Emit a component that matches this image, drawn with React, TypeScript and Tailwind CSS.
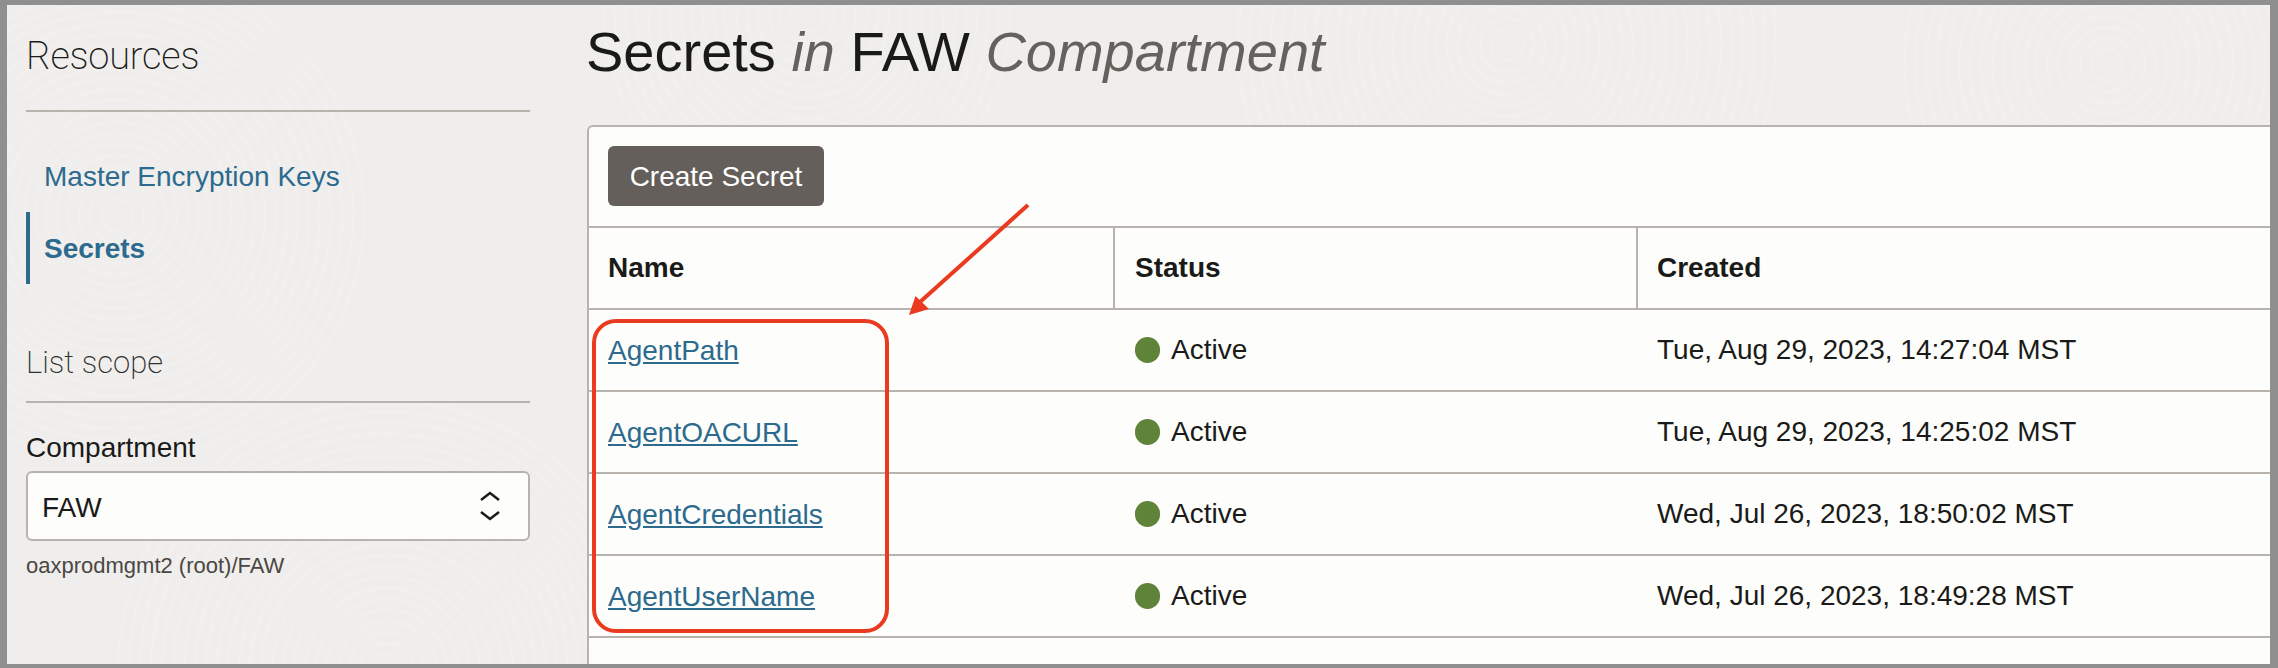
import React from 'react';

const rows = [
  { name: 'AgentPath', created: 'Tue, Aug 29, 2023, 14:27:04 MST' },
  { name: 'AgentOACURL', created: 'Tue, Aug 29, 2023, 14:25:02 MST' },
  { name: 'AgentCredentials', created: 'Wed, Jul 26, 2023, 18:50:02 MST' },
  { name: 'AgentUserName', created: 'Wed, Jul 26, 2023, 18:49:28 MST' },
];

const whorls = [
  { cx: 110, cy: 210, count: 22 },
  { cx: 380, cy: 665, count: 24 },
  { cx: 800, cy: 10, count: 18 },
  { cx: 1500, cy: 40, count: 24 },
  { cx: 2100, cy: 60, count: 18 },
];

const Texture: React.FC = () => (
  <svg className="absolute inset-0 h-full w-full" aria-hidden="true">
    {whorls.map((w) =>
      Array.from({ length: w.count }, (_, i) => (
        <circle
          key={`${w.cx}-${i}`}
          cx={w.cx}
          cy={w.cy}
          r={16 + i * 11}
          fill="none"
          stroke="#f1f0ef"
          strokeWidth="3"
        />
      )),
    )}
  </svg>
);

export default function App() {
  return (
    <div className="relative h-[668px] w-full overflow-hidden bg-[#8f8f8f] pt-[5px] pr-[8px] pb-[4px] pl-[7px] font-['Liberation_Sans',Arial,sans-serif] text-[#1a1a18]">
      <div className="relative flex h-full overflow-hidden bg-[#efeeec]">
        <Texture />

        <aside className="relative w-[523px] shrink-0 pt-[31px] pl-[19px]">
          <h2 className="border-b-2 border-[#b8b3ac] pb-[34px] font-['Roboto',sans-serif] text-[38px] leading-[40px] font-extralight tracking-[-0.2px]">
            Resources
          </h2>
          <nav className="mt-[28px]">
            <a className="flex h-[72px] items-center pt-[2px] pl-[18px] text-[28px] text-[#2c6a8e]">
              Master Encryption Keys
            </a>
            <a className="flex h-[72px] items-center border-l-4 border-[#2c6a8e] pt-[2px] pl-[14px] text-[28px] font-bold text-[#2c6a8e]">
              Secrets
            </a>
          </nav>
          <h3 className="mt-[60px] border-b-2 border-[#b8b3ac] pt-[1px] pb-[20px] font-['Roboto',sans-serif] text-[31px] leading-[36px] font-extralight text-[#2f2f2c]">
            List scope
          </h3>
          <label className="mt-[28px] block pt-[1px] text-[28px] leading-[31px]">Compartment</label>
          <div className="mt-[8px] flex h-[70px] items-center justify-between rounded-[6px] border-2 border-[#b8b3ac] bg-[#fdfdfb] pt-[3px] pr-[26px] pl-[14px] text-[28px]">
            <span>FAW</span>
            <svg className="-mt-[3px]" width="24" height="31" viewBox="0 0 24 31" fill="none" stroke="#1a1a18" strokeWidth="2.5">
              <path d="M3 9 L12 2 L21 9" />
              <path d="M3 21 L12 28 L21 21" />
            </svg>
          </div>
          <p className="mt-[11px] text-[22px] leading-[28px] text-[#4a4743]">oaxprodmgmt2 (root)/FAW</p>
        </aside>

        <main className="relative min-w-0 flex-1 pt-[15px] pl-[57px]">
          <h1 className="-ml-[1px] text-[56px] leading-[64px] whitespace-nowrap">
            Secrets <em className="text-[#66615c]">in</em> FAW <em className="text-[#66615c]">Compartment</em>
          </h1>
          <section className="mt-[41px] h-[600px] rounded-tl-[6px] border-t-2 border-l-2 border-[#b8b3ac] bg-[#fdfdfb]">
            <div className="px-[19px] pt-[19px] pb-[20px]">
              <button className="h-[60px] w-[216px] rounded-[6px] bg-[#645f5a] pt-[1px] text-[28px] text-white">
                Create Secret
              </button>
            </div>
            <div className="grid h-[84px] grid-cols-[526px_523px_1fr] border-y-2 border-[#b8b3ac] text-[28px] font-bold">
              <div className="flex items-center border-r-2 border-[#b8b3ac] pl-[19px]">Name</div>
              <div className="flex items-center border-r-2 border-[#b8b3ac] pl-[20px]">Status</div>
              <div className="flex items-center pl-[19px]">Created</div>
            </div>
            {rows.map((row) => (
              <div
                key={row.name}
                className="grid h-[82px] grid-cols-[526px_523px_1fr] items-center border-b-2 border-[#b8b3ac] text-[28px]"
              >
                <a className="pt-[1px] pl-[19px] text-[#2c6a8e] underline">{row.name}</a>
                <div className="flex items-center pl-[20px]">
                  <span className="h-[26px] w-[25px] rounded-full bg-[#5f8339]" />
                  <span className="ml-[11px]">Active</span>
                </div>
                <div className="pl-[19px]">{row.created}</div>
              </div>
            ))}
          </section>
        </main>
      </div>

      {/* callout drawn over the table */}
      <div className="absolute top-[319px] left-[592px] h-[314px] w-[297px] rounded-[24px] border-4 border-[#ea3b20]" />
      <svg className="absolute top-[200px] left-[900px]" width="135" height="120" viewBox="0 0 135 120" aria-hidden="true">
        <path d="M128 5 L20 102" stroke="#ea3b20" strokeWidth="4" fill="none" />
        <polygon points="9,115 15.5,96 29,109" fill="#ea3b20" />
      </svg>
    </div>
  );
}
